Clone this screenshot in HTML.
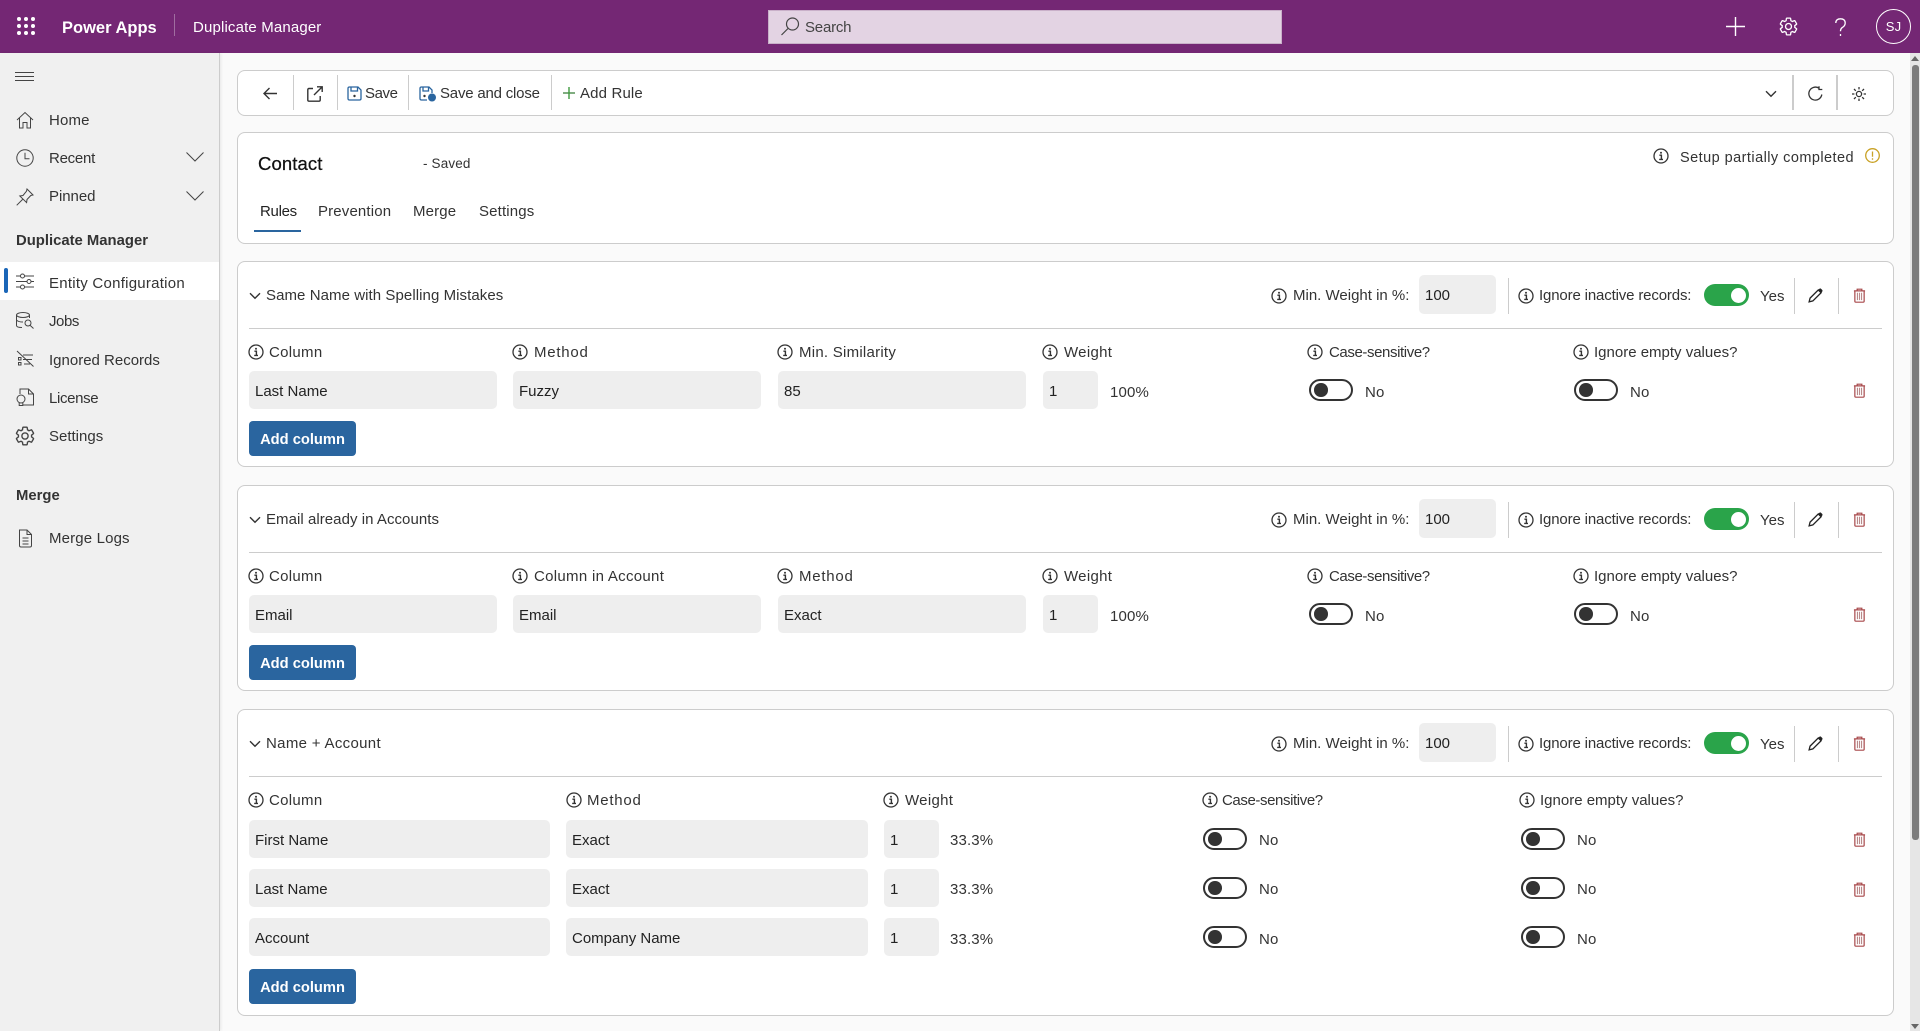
<!DOCTYPE html>
<html lang="en"><head><meta charset="utf-8"><title>Duplicate Manager</title>
<style>
*{box-sizing:border-box}
html,body{margin:0;padding:0;width:1920px;height:1031px;overflow:hidden;background:#fafafa;font-family:"Liberation Sans",sans-serif;font-size:15px;color:#333;letter-spacing:.15px}
.a,.t,.f,.s,.on,.off,.card,.ic,.btn,.dv,.top,.side{position:absolute}
.t{white-space:nowrap;line-height:20px;margin-top:1px}
.top{left:0;top:0;width:1920px;height:53px;background:#742774}
.side{left:0;top:53px;width:220px;height:978px;background:#f0f0f0;border-right:1px solid #ccc;box-shadow:1px 0 3px rgba(0,0,0,.08)}
.card{left:237px;width:1657px;background:#fff;border:1px solid #ccc;border-radius:8px}
.f{background:#eee;border-radius:5px;height:38px;line-height:41px;padding-left:6px;color:#222;font-size:15px;white-space:nowrap;letter-spacing:0}
.s{width:1px;background:#ccc}
.dv{left:11px;width:1633px;height:1px;background:#ccc}
.on{width:45px;height:22px;background:#2aa44a;border-radius:11px}
.on:after{content:"";position:absolute;right:3px;top:3.5px;width:15px;height:15px;background:#fff;border-radius:50%}
.off{width:44px;height:22px;background:#fff;border:2px solid #333;border-radius:11px}
.off:after{content:"";position:absolute;left:3px;top:2.25px;width:13.5px;height:13.5px;background:#333;border-radius:50%}
.btn{left:11px;width:107px;height:35px;background:#2a659f;border-radius:4px;color:#fff;font-weight:bold;font-size:14.7px;letter-spacing:0;line-height:38px;text-align:center}
.ic{display:block;overflow:visible}
.nav{fill:none;stroke:#444;stroke-width:1}
.b{font-weight:bold;letter-spacing:0}
.lm{letter-spacing:.75px}.lc{letter-spacing:-.4px}.lw{letter-spacing:.3px}.li{letter-spacing:0}
.lca{letter-spacing:.3px}.ls{letter-spacing:.25px}.mw{letter-spacing:0}.ii{letter-spacing:-.15px}.y{letter-spacing:0}
</style></head><body>
<svg width="0" height="0" style="position:absolute">
<defs>
<symbol id="info" viewBox="0 0 16 16"><circle cx="8" cy="8" r="7" fill="none" stroke="#333" stroke-width="1.3"/><circle cx="8" cy="4.8" r="1" fill="#333"/><path d="M6.4 7.2H8.4V11.2M6.2 11.4H10" fill="none" stroke="#333" stroke-width="1.4"/></symbol>
<symbol id="trash" viewBox="0 0 14 16"><path d="M1 3H13M4.5 3V1.2H9.5V3M2 3V14.2Q2 15.2 3 15.2H11Q12 15.2 12 14.2V3" fill="none" stroke="#a8494b" stroke-width="1.3"/><path d="M4.8 5V13M7 5V13M9.2 5V13" stroke="#b98a8a" stroke-width="1.2"/></symbol>
<symbol id="pencil" viewBox="0 0 16 16"><path d="M1.2 14.8L2.2 10.8L11 2L14 5L5.2 13.8Z" fill="none" stroke="#222" stroke-width="1.4"/><path d="M10.5 2.5L12.2 .8Q13 0 14 .9L15.1 2Q16 3 15.2 3.8L13.5 5.5Z" fill="#222"/></symbol>
<symbol id="chev" viewBox="0 0 12 8"><path d="M1 1.2L6 6.2L11 1.2" fill="none" stroke="#333" stroke-width="1.4"/></symbol>
<symbol id="gear" viewBox="0 0 24 24"><path fill="none" stroke-width="1.5" d="M19.14 12.94c.04-.3.06-.61.06-.94 0-.32-.02-.64-.07-.94l2.03-1.58c.18-.14.23-.41.12-.61l-1.92-3.32c-.12-.22-.37-.29-.59-.22l-2.39.96c-.5-.38-1.03-.7-1.62-.94l-.36-2.54c-.04-.24-.24-.41-.48-.41h-3.84c-.24 0-.43.17-.47.41l-.36 2.54c-.59.24-1.13.57-1.62.94l-2.39-.96c-.22-.08-.47 0-.59.22L2.74 8.87c-.12.21-.08.47.12.61l2.03 1.58c-.05.3-.09.63-.09.94s.02.64.07.94l-2.03 1.58c-.18.14-.23.41-.12.61l1.92 3.32c.12.22.37.29.59.22l2.39-.96c.5.38 1.03.7 1.62.94l.36 2.54c.05.24.24.41.48.41h3.84c.24 0 .44-.17.47-.41l.36-2.54c.59-.24 1.13-.56 1.62-.94l2.39.96c.22.08.47 0 .59-.22l1.92-3.32c.12-.22.07-.47-.12-.61l-2.01-1.58z"/><circle cx="12" cy="12" r="3.4" fill="none" stroke-width="1.5"/></symbol>
</defs></svg>

<!-- Top bar -->
<div class="top">
<svg class="ic" style="left:17px;top:17px" width="19" height="19" fill="#fff"><circle cx="2" cy="2" r="2"/><circle cx="9" cy="2" r="2"/><circle cx="16" cy="2" r="2"/><circle cx="2" cy="9" r="2"/><circle cx="9" cy="9" r="2"/><circle cx="16" cy="9" r="2"/><circle cx="2" cy="16" r="2"/><circle cx="9" cy="16" r="2"/><circle cx="16" cy="16" r="2"/></svg>
<div class="t b" style="left:62px;top:17px;color:#fff;font-size:16.5px">Power Apps</div>
<div class="s" style="left:174px;top:14px;height:22px;background:#a06da0"></div>
<div class="t" style="left:193px;top:17px;color:#fff;font-size:15px">Duplicate Manager</div>
<div class="a" style="left:768px;top:10px;width:514px;height:34px;background:#e3d3e3;border:1px solid #c9b0c9"></div>
<svg class="ic" style="left:780px;top:17px" width="20" height="20" fill="none" stroke="#444" stroke-width="1.2"><circle cx="12.5" cy="7" r="6"/><path d="M8 11.5L1.5 18"/></svg>
<div class="t" style="left:805px;top:17px;color:#444;font-size:15px;letter-spacing:-.2px">Search</div>
<svg class="ic" style="left:1726px;top:17px" width="19" height="19" stroke="#fff" stroke-width="1.4"><path d="M0 9.5H19M9.5 0V19"/></svg>
<svg class="ic" style="left:1778px;top:16px;stroke:#fff" width="21" height="21"><use href="#gear"/></svg>
<svg class="ic" style="left:1835px;top:18px" width="11" height="19" fill="none" stroke="#fff" stroke-width="1.3"><path d="M.8 5Q.8 .8 5.5 .8Q10.2 .8 10.2 5Q10.2 7.8 7.4 9.4Q5.5 10.6 5.5 13.2M5.5 16V18"/></svg>
<div class="a" style="left:1876px;top:9px;width:35px;height:35px;border:1px solid #fff;border-radius:50%;color:#fff;text-align:center;line-height:33px;font-size:13px">SJ</div>
</div>

<!-- Sidebar -->
<div class="side">
<svg class="ic" style="left:15px;top:19px" width="19" height="9" stroke="#444" stroke-width="1"><path d="M0 .5H19M0 4.5H19M0 8.5H19"/></svg>
<svg class="ic nav" style="left:16px;top:58px" width="18" height="18"><path d="M1 9L9 1.5L17 9M3.5 7V17H7V11.5H11V17H14.5V7"/></svg>
<div class="t" style="left:49px;top:57px">Home</div>
<svg class="ic nav" style="left:16px;top:96px" width="18" height="18"><circle cx="9" cy="9" r="8.2"/><path d="M9 3.8V9.8H13.5"/></svg>
<div class="t" style="left:49px;top:95px;letter-spacing:-.25px">Recent</div>
<svg class="ic" style="left:186px;top:99px" width="18" height="10" fill="none" stroke="#444" stroke-width="1"><path d="M.5 .5L9 9L17.5 .5"/></svg>
<svg class="ic nav" style="left:16px;top:135px" width="18" height="18"><path d="M11 1L17 7L14.8 7.5L11 11.5L10.6 14.6L3.8 8L7 7.5L10.5 3.2ZM7 11L.7 17.3"/></svg>
<div class="t" style="left:49px;top:133px;letter-spacing:-.05px">Pinned</div>
<svg class="ic" style="left:186px;top:138px" width="18" height="10" fill="none" stroke="#444" stroke-width="1"><path d="M.5 .5L9 9L17.5 .5"/></svg>
<div class="t b" style="left:16px;top:177px;font-size:14.85px;color:#333">Duplicate Manager</div>
<div class="a" style="left:0;top:209px;width:219px;height:38px;background:#fff"></div>
<div class="a" style="left:4px;top:215px;width:4px;height:25px;background:#1a66b8;border-radius:2px"></div>
<svg class="ic nav" style="left:16px;top:220px" width="18" height="17"><path d="M0 3H4.5M8.5 3H18M0 8.5H11M15 8.5H18M0 14H4.5M8.5 14H18"/><circle cx="6.5" cy="3" r="2"/><circle cx="13" cy="8.5" r="2"/><circle cx="6.5" cy="14" r="2"/></svg>
<div class="t" style="left:49px;top:220px;letter-spacing:.25px">Entity Configuration</div>
<svg class="ic nav" style="left:16px;top:259px" width="18" height="18"><ellipse cx="7" cy="3" rx="6.5" ry="2.5"/><path d="M.5 3V13.5Q.5 15.5 6 15.5M.5 8Q2 10 7 10M13.5 3V6"/><circle cx="12" cy="11" r="3"/><path d="M14 13.2L17.5 16.5"/></svg>
<div class="t" style="left:49px;top:258px;letter-spacing:-.45px">Jobs</div>
<svg class="ic nav" style="left:16px;top:297px" width="18" height="18"><path d="M1 1L17.5 16.5M7 5H17M7 9.5H16M8 14H14"/><rect x="2.5" y="7.5" width="2.5" height="2.5"/><rect x="2.5" y="12.5" width="2.5" height="2.5"/></svg>
<div class="t" style="left:49px;top:297px;letter-spacing:0">Ignored Records</div>
<svg class="ic nav" style="left:16px;top:335px" width="18" height="18"><path d="M4 6V1H12.5L17.5 6V17H7M12.5 1V6H17.5"/><circle cx="5" cy="11" r="4"/><path d="M3.2 14.5V17.5H6.8V14.5"/></svg>
<div class="t" style="left:49px;top:335px;letter-spacing:-.35px">License</div>
<svg class="ic" style="left:14px;top:372px;stroke:#444" width="22" height="22"><use href="#gear"/></svg>
<div class="t" style="left:49px;top:373px;letter-spacing:0">Settings</div>
<div class="t b" style="left:16px;top:432px;font-size:14.85px">Merge</div>
<svg class="ic nav" style="left:18px;top:476px" width="15" height="19"><path d="M1.5 1H9L13.5 5.5V16.5Q13.5 18 12 18H3Q1.5 18 1.5 16.5ZM9 1V5.5H13.5M4.5 9H10.5M4.5 12H10.5M4.5 15H10.5"/></svg>
<div class="t" style="left:49px;top:475px">Merge Logs</div>
</div>

<!-- Toolbar -->
<div class="card" style="top:70px;height:46px"></div>
<div class="s" style="left:293px;top:75px;height:35px"></div>
<div class="s" style="left:337px;top:75px;height:35px"></div>
<div class="s" style="left:408px;top:75px;height:35px"></div>
<div class="s" style="left:551px;top:75px;height:35px"></div>
<div class="s" style="left:1792px;top:75px;height:35px;width:2px"></div>
<div class="s" style="left:1836px;top:75px;height:35px;width:2px"></div>
<svg class="ic" style="left:263px;top:87px" width="15" height="13" fill="none" stroke="#333" stroke-width="1.4"><path d="M14 6.5H1M6.5 1L1 6.5L6.5 12"/></svg>
<svg class="ic" style="left:307px;top:86px" width="16" height="16" fill="none" stroke="#333" stroke-width="1.4"><path d="M6 2.5H2Q.8 2.5 .8 3.8V14Q.8 15.2 2 15.2H12Q13.2 15.2 13.2 14V10M7 9L15 1M10 .8H15.2V6"/></svg>
<svg class="ic" style="left:347px;top:86px" width="15" height="15" fill="none" stroke="#2a659f" stroke-width="1.3"><path d="M1 2.5Q1 1 2.5 1H11L14 4V12.5Q14 14 12.5 14H2.5Q1 14 1 12.5ZM4 1V5H10.5V1"/><circle cx="7.5" cy="10" r="1.2" fill="#333" stroke="none"/></svg>
<div class="t" style="left:365px;top:83px;letter-spacing:-.4px">Save</div>
<svg class="ic" style="left:419px;top:86px" width="18" height="16" fill="none" stroke="#2a659f" stroke-width="1.3"><path d="M1 2.5Q1 1 2.5 1H10L13 4V7M8 14H2.5Q1 14 1 12.5V2.5M4 1V5H9.5V1"/><circle cx="13" cy="11.5" r="4" fill="#2a659f" stroke="none"/><circle cx="5.5" cy="10" r="1.2" fill="#333" stroke="none"/></svg>
<div class="t" style="left:440px;top:83px;letter-spacing:-.2px">Save and close</div>
<svg class="ic" style="left:563px;top:87px" width="12" height="12" stroke-width="1.4"><path d="M0 6H12" stroke="#4a8a4a"/><path d="M6 0V12" stroke="#3f9a3f"/></svg>
<div class="t" style="left:580px;top:83px">Add Rule</div>
<svg class="ic" style="left:1765px;top:90px" width="12" height="8"><use href="#chev"/></svg>
<svg class="ic" style="left:1808px;top:86px" width="15" height="15" fill="none" stroke="#333" stroke-width="1.3"><path d="M13.8 8.5A6.5 6.5 0 1 1 11 2.2M11 .2V3.5H14.3"/></svg>
<svg class="ic" style="left:1852px;top:87px" width="14" height="14" fill="none" stroke="#333" stroke-width="1.3"><circle cx="7" cy="7" r="2.6"/><path d="M7 0V2.4M7 11.6V14M0 7H2.4M11.6 7H14M2 2L3.8 3.8M10.2 10.2L12 12M12 2L10.2 3.8M3.8 10.2L2 12"/></svg>

<!-- Header card -->
<div class="card" style="top:132px;height:112px"></div>
<div class="t" style="left:258px;top:153px;font-size:18.5px;color:#111;font-weight:500;letter-spacing:.1px;-webkit-text-stroke:.25px #111">Contact</div>
<div class="t" style="left:423px;top:153px;font-size:13.5px">- Saved</div>
<div class="t" style="left:260px;top:201px;color:#222;letter-spacing:-.3px">Rules</div>
<div class="t" style="left:318px;top:201px">Prevention</div>
<div class="t" style="left:413px;top:201px">Merge</div>
<div class="t" style="left:479px;top:201px">Settings</div>
<div class="a" style="left:254px;top:230px;width:47px;height:2px;background:#2a659f"></div>
<svg class="ic" style="left:1653px;top:148px" width="16" height="16"><use href="#info"/></svg>
<div class="t" style="left:1680px;top:147px;font-size:14.5px;letter-spacing:.45px">Setup partially completed</div>
<svg class="ic" style="left:1865px;top:148px" width="15" height="15" fill="none" stroke="#c9a227" stroke-width="1.3"><circle cx="7.5" cy="7.5" r="6.8"/><path d="M7.5 3.5V8.8M7.5 10.2V11.8"/></svg>

<!-- Rule 1 -->
<div class="card" style="top:261px;height:206px">
<svg class="ic" style="left:11px;top:30px" width="12" height="8"><use href="#chev"/></svg>
<div class="t" style="left:28px;top:23px;letter-spacing:.07px">Same Name with Spelling Mistakes</div>
<svg class="ic" style="left:1033px;top:26px" width="16" height="16"><use href="#info"/></svg>
<div class="t mw" style="left:1055px;top:23px">Min. Weight in %:</div>
<div class="f" style="left:1181px;top:13px;width:77px;height:39px;line-height:42px">100</div>
<div class="s" style="left:1270px;top:16px;height:36px"></div>
<svg class="ic" style="left:1280px;top:26px" width="16" height="16"><use href="#info"/></svg>
<div class="t ii" style="left:1301px;top:23px">Ignore inactive records:</div>
<div class="on" style="left:1466px;top:22px"></div>
<div class="t y" style="left:1522px;top:24px">Yes</div>
<div class="s" style="left:1556px;top:16px;height:36px"></div>
<svg class="ic" style="left:1570px;top:26px" width="15" height="15"><use href="#pencil"/></svg>
<div class="s" style="left:1600px;top:16px;height:36px"></div>
<svg class="ic" style="left:1615px;top:26px" width="13" height="15"><use href="#trash"/></svg>
<div class="dv" style="top:66px"></div>
<svg class="ic" style="left:10px;top:82px" width="16" height="16"><use href="#info"/></svg>
<div class="t" style="left:31px;top:80px;letter-spacing:.3px">Column</div>
<svg class="ic" style="left:274px;top:82px" width="16" height="16"><use href="#info"/></svg>
<div class="t lm" style="left:296px;top:80px">Method</div>
<svg class="ic" style="left:539px;top:82px" width="16" height="16"><use href="#info"/></svg>
<div class="t ls" style="left:561px;top:80px">Min. Similarity</div>
<svg class="ic" style="left:804px;top:82px" width="16" height="16"><use href="#info"/></svg>
<div class="t lw" style="left:826px;top:80px">Weight</div>
<svg class="ic" style="left:1069px;top:82px" width="16" height="16"><use href="#info"/></svg>
<div class="t lc" style="left:1091px;top:80px">Case-sensitive?</div>
<svg class="ic" style="left:1335px;top:82px" width="16" height="16"><use href="#info"/></svg>
<div class="t li" style="left:1356px;top:80px">Ignore empty values?</div>
<div class="f" style="left:11px;top:109px;width:248px">Last Name</div>
<div class="f" style="left:275px;top:109px;width:248px">Fuzzy</div>
<div class="f" style="left:540px;top:109px;width:248px">85</div>
<div class="f" style="left:805px;top:109px;width:55px">1</div>
<div class="t" style="left:872px;top:120px">100%</div>
<div class="off" style="left:1071px;top:117px"></div>
<div class="t" style="left:1127px;top:120px">No</div>
<div class="off" style="left:1336px;top:117px"></div>
<div class="t" style="left:1392px;top:120px">No</div>
<svg class="ic" style="left:1615px;top:121px" width="13" height="15"><use href="#trash"/></svg>
<div class="btn" style="top:159px">Add column</div>
</div>

<!-- Rule 2 -->
<div class="card" style="top:485px;height:206px">
<svg class="ic" style="left:11px;top:30px" width="12" height="8"><use href="#chev"/></svg>
<div class="t" style="left:28px;top:23px;letter-spacing:.05px">Email already in Accounts</div>
<svg class="ic" style="left:1033px;top:26px" width="16" height="16"><use href="#info"/></svg>
<div class="t mw" style="left:1055px;top:23px">Min. Weight in %:</div>
<div class="f" style="left:1181px;top:13px;width:77px;height:39px;line-height:42px">100</div>
<div class="s" style="left:1270px;top:16px;height:36px"></div>
<svg class="ic" style="left:1280px;top:26px" width="16" height="16"><use href="#info"/></svg>
<div class="t ii" style="left:1301px;top:23px">Ignore inactive records:</div>
<div class="on" style="left:1466px;top:22px"></div>
<div class="t y" style="left:1522px;top:24px">Yes</div>
<div class="s" style="left:1556px;top:16px;height:36px"></div>
<svg class="ic" style="left:1570px;top:26px" width="15" height="15"><use href="#pencil"/></svg>
<div class="s" style="left:1600px;top:16px;height:36px"></div>
<svg class="ic" style="left:1615px;top:26px" width="13" height="15"><use href="#trash"/></svg>
<div class="dv" style="top:66px"></div>
<svg class="ic" style="left:10px;top:82px" width="16" height="16"><use href="#info"/></svg>
<div class="t" style="left:31px;top:80px;letter-spacing:.3px">Column</div>
<svg class="ic" style="left:274px;top:82px" width="16" height="16"><use href="#info"/></svg>
<div class="t lca" style="left:296px;top:80px">Column in Account</div>
<svg class="ic" style="left:539px;top:82px" width="16" height="16"><use href="#info"/></svg>
<div class="t lm" style="left:561px;top:80px">Method</div>
<svg class="ic" style="left:804px;top:82px" width="16" height="16"><use href="#info"/></svg>
<div class="t lw" style="left:826px;top:80px">Weight</div>
<svg class="ic" style="left:1069px;top:82px" width="16" height="16"><use href="#info"/></svg>
<div class="t lc" style="left:1091px;top:80px">Case-sensitive?</div>
<svg class="ic" style="left:1335px;top:82px" width="16" height="16"><use href="#info"/></svg>
<div class="t li" style="left:1356px;top:80px">Ignore empty values?</div>
<div class="f" style="left:11px;top:109px;width:248px">Email</div>
<div class="f" style="left:275px;top:109px;width:248px">Email</div>
<div class="f" style="left:540px;top:109px;width:248px">Exact</div>
<div class="f" style="left:805px;top:109px;width:55px">1</div>
<div class="t" style="left:872px;top:120px">100%</div>
<div class="off" style="left:1071px;top:117px"></div>
<div class="t" style="left:1127px;top:120px">No</div>
<div class="off" style="left:1336px;top:117px"></div>
<div class="t" style="left:1392px;top:120px">No</div>
<svg class="ic" style="left:1615px;top:121px" width="13" height="15"><use href="#trash"/></svg>
<div class="btn" style="top:159px">Add column</div>
</div>

<!-- Rule 3 -->
<div class="card" style="top:709px;height:307px">
<svg class="ic" style="left:11px;top:30px" width="12" height="8"><use href="#chev"/></svg>
<div class="t" style="left:28px;top:23px;letter-spacing:.32px">Name + Account</div>
<svg class="ic" style="left:1033px;top:26px" width="16" height="16"><use href="#info"/></svg>
<div class="t mw" style="left:1055px;top:23px">Min. Weight in %:</div>
<div class="f" style="left:1181px;top:13px;width:77px;height:39px;line-height:42px">100</div>
<div class="s" style="left:1270px;top:16px;height:36px"></div>
<svg class="ic" style="left:1280px;top:26px" width="16" height="16"><use href="#info"/></svg>
<div class="t ii" style="left:1301px;top:23px">Ignore inactive records:</div>
<div class="on" style="left:1466px;top:22px"></div>
<div class="t y" style="left:1522px;top:24px">Yes</div>
<div class="s" style="left:1556px;top:16px;height:36px"></div>
<svg class="ic" style="left:1570px;top:26px" width="15" height="15"><use href="#pencil"/></svg>
<div class="s" style="left:1600px;top:16px;height:36px"></div>
<svg class="ic" style="left:1615px;top:26px" width="13" height="15"><use href="#trash"/></svg>
<div class="dv" style="top:66px"></div>
<svg class="ic" style="left:10px;top:82px" width="16" height="16"><use href="#info"/></svg>
<div class="t" style="left:31px;top:80px;letter-spacing:.3px">Column</div>
<svg class="ic" style="left:328px;top:82px" width="16" height="16"><use href="#info"/></svg>
<div class="t lm" style="left:349px;top:80px">Method</div>
<svg class="ic" style="left:645px;top:82px" width="16" height="16"><use href="#info"/></svg>
<div class="t lw" style="left:667px;top:80px">Weight</div>
<svg class="ic" style="left:964px;top:82px" width="16" height="16"><use href="#info"/></svg>
<div class="t lc" style="left:984px;top:80px">Case-sensitive?</div>
<svg class="ic" style="left:1281px;top:82px" width="16" height="16"><use href="#info"/></svg>
<div class="t li" style="left:1302px;top:80px">Ignore empty values?</div>

<div class="f" style="left:11px;top:110px;width:301px">First Name</div>
<div class="f" style="left:328px;top:110px;width:302px">Exact</div>
<div class="f" style="left:646px;top:110px;width:55px">1</div>
<div class="t" style="left:712px;top:120px">33.3%</div>
<div class="off" style="left:965px;top:118px"></div>
<div class="t" style="left:1021px;top:120px">No</div>
<div class="off" style="left:1283px;top:118px"></div>
<div class="t" style="left:1339px;top:120px">No</div>
<svg class="ic" style="left:1615px;top:122px" width="13" height="15"><use href="#trash"/></svg>

<div class="f" style="left:11px;top:159px;width:301px">Last Name</div>
<div class="f" style="left:328px;top:159px;width:302px">Exact</div>
<div class="f" style="left:646px;top:159px;width:55px">1</div>
<div class="t" style="left:712px;top:169px">33.3%</div>
<div class="off" style="left:965px;top:167px"></div>
<div class="t" style="left:1021px;top:169px">No</div>
<div class="off" style="left:1283px;top:167px"></div>
<div class="t" style="left:1339px;top:169px">No</div>
<svg class="ic" style="left:1615px;top:172px" width="13" height="15"><use href="#trash"/></svg>

<div class="f" style="left:11px;top:208px;width:301px">Account</div>
<div class="f" style="left:328px;top:208px;width:302px">Company Name</div>
<div class="f" style="left:646px;top:208px;width:55px">1</div>
<div class="t" style="left:712px;top:219px">33.3%</div>
<div class="off" style="left:965px;top:216px"></div>
<div class="t" style="left:1021px;top:219px">No</div>
<div class="off" style="left:1283px;top:216px"></div>
<div class="t" style="left:1339px;top:219px">No</div>
<svg class="ic" style="left:1615px;top:222px" width="13" height="15"><use href="#trash"/></svg>
<div class="btn" style="top:259px">Add column</div>
</div>

<!-- Scrollbar -->
<div class="a" style="left:1910px;top:53px;width:10px;height:978px;background:#e6e6e6"></div>
<div class="a" style="left:1912px;top:65px;width:7px;height:775px;background:#7c7c7c;border-radius:3px"></div>
<svg class="ic" style="left:1911px;top:56px" width="8" height="5" fill="#666"><path d="M4 0L8 5H0Z"/></svg>
<svg class="ic" style="left:1911px;top:1024px" width="8" height="5" fill="#666"><path d="M4 5L8 0H0Z"/></svg>
</body></html>
